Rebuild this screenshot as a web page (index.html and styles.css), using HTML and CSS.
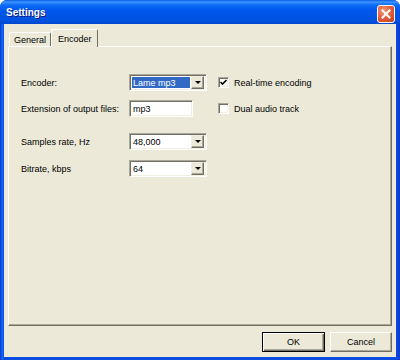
FILE: index.html
```html
<!DOCTYPE html>
<html lang="en">
<head>
    <meta charset="UTF-8">
    <title>Settings</title>
    <link rel="stylesheet" href="styles.css">
</head>
<body>

<div class="window">
    <div class="titlebar">
        <span class="title">Settings</span>
        <span class="close">
            <svg width="10" height="10" viewBox="0 0 10 10">
                <path d="M1.5 1.5 L8.5 8.5 M8.5 1.5 L1.5 8.5" stroke="#fff" stroke-width="2" stroke-linecap="square"/>
            </svg>
        </span>
    </div>

    <div class="client">
        <div class="tabs">
            <div class="tab">General</div>
            <div class="tab active">Encoder</div>
        </div>

        <div class="panel">
            <!-- Encoder -->
            <div class="row row-1">
                <span class="label">Encoder:</span>
                <div class="field">
                    <div class="combo">
                        <span class="value selected">Lame mp3</span>
                        <span class="drop"></span>
                    </div>
                </div>
                <label class="check">
                    <span class="box">
                        <svg width="9" height="9" viewBox="0 0 9 9">
                            <path d="M1.5 4 L3.5 6 L7.5 2" stroke="#000" stroke-width="1.6" fill="none"/>
                        </svg>
                    </span>
                    Real-time encoding
                </label>
            </div>

            <div class="row row-2">
                <span class="label">Extension of output files:</span>
                <div class="field">
                    <div class="textbox">mp3</div>
                </div>
                <label class="check">
                    <span class="box"></span>
                    Dual audio track
                </label>
            </div>

            <div class="row row-3">
                <span class="label">Samples rate, Hz</span>
                <div class="field">
                    <div class="combo">
                        <span class="value">48,000</span>
                        <span class="drop"></span>
                    </div>
                </div>
            </div>

            <div class="row row-4">
                <span class="label">Bitrate, kbps</span>
                <div class="field">
                    <div class="combo">
                        <span class="value">64</span>
                        <span class="drop"></span>
                    </div>
                </div>
            </div>
        </div>

        <div class="buttons">
            <button class="btn default">OK</button>
            <button class="btn">Cancel</button>
        </div>
    </div>
</div>

</body>
</html>
```

FILE: styles.css
```css
body {
    margin: 0;
    font-family: 'Liberation Sans', Arial, sans-serif;
    font-size: 9px;
    color: #000;
    background: #fff;
}

.window {
    width: 400px;
    height: 360px;
    display: flex;
    flex-direction: column;
    background: linear-gradient(to right, #0831d9 0, #166aee 2px, #0a4ce0 4px, #0a4ce0 396px, #0a3ad0 400px);
    border-radius: 7px 7px 0 0;
    overflow: hidden;
}

/* Title bar */
.titlebar {
    height: 24px;
    flex: none;
    display: flex;
    align-items: center;
    justify-content: space-between;
    padding: 0 5px 0 6px;
    background: linear-gradient(to bottom, #0a5ee8 0, #3d95ff 2px, #0d6cf5 5px, #0058ee 10px, #0054e3 17px, #0052de 21px, #0046d0 24px);
}

.title {
    color: #fff;
    font-weight: bold;
    font-size: 10px;
    text-shadow: 1px 1px #0a1883;
}

.close {
    width: 16px;
    height: 16px;
    display: flex;
    align-items: center;
    justify-content: center;
    border: 1px solid #fff;
    border-radius: 3px;
    background: radial-gradient(circle at 35% 30%, #f09a7c 0, #e2613f 45%, #c8391a 100%);
    margin-top: 3px;
}

/* Client area */
.client {
    flex: 1;
    margin: 0 4px 3px 4px;
    background: #ece9d8;
    display: flex;
    flex-direction: column;
}

.tabs {
    height: 22px;
    display: flex;
    align-items: flex-end;
    padding-left: 5px;
}

.tab {
    height: 13px;
    padding: 0 4px;
    display: flex;
    align-items: center;
    border: 1px solid;
    border-color: #fff #716f64 transparent #fff;
    border-bottom: none;
    border-radius: 2px 2px 0 0;
}

.tab.active {
    height: 17px;
    margin-bottom: -1px;
    padding: 0 5px 0 6px;
    background: #ece9d8;
    position: relative;
    z-index: 1;
}

.panel {
    height: 278px;
    margin: 0 4px;
    border: 1px solid;
    border-color: #fff #716f64 #716f64 #fff;
    box-shadow: inset -1px -1px #aca899;
    padding-left: 12px;
}

/* Form rows */
.row {
    height: 17px;
    display: flex;
    align-items: center;
}

.row-1 { margin-top: 27px; }
.row-2 { margin-top: 9px; }
.row-3 { margin-top: 16px; }
.row-4 { margin-top: 10px; }

.label {
    width: 108px;
}

.field {
    width: 78px;
    height: 17px;
}

.combo, .textbox {
    height: 17px;
    box-sizing: border-box;
    background: #fff;
    border: 1px solid;
    border-color: #aca899 #fff #fff #aca899;
    box-shadow: inset 1px 1px #716f64, inset -1px -1px #f1efe2;
    display: flex;
    align-items: center;
}

.combo {
    width: 78px;
    padding: 2px;
}

.textbox {
    width: 64px;
    padding-left: 3px;
}

.value {
    flex: 1;
    height: 100%;
    display: flex;
    align-items: center;
    padding-left: 1px;
}

.value.selected {
    background: #316ac5;
    color: #fff;
}

.drop {
    width: 13px;
    height: 13px;
    box-sizing: border-box;
    margin-left: 1px;
    background: #ece9d8;
    border: 1px solid;
    border-color: #f1efe2 #716f64 #716f64 #f1efe2;
    box-shadow: inset -1px -1px #aca899;
    display: flex;
    align-items: center;
    justify-content: center;
}

.drop::after {
    content: "";
    border-left: 3px solid transparent;
    border-right: 3px solid transparent;
    border-top: 3px solid #000;
}

.check {
    margin-left: 11px;
    display: flex;
    align-items: center;
    gap: 5px;
}

.box {
    width: 11px;
    height: 11px;
    box-sizing: border-box;
    background: #fff;
    border: 1px solid;
    border-color: #aca899 #fff #fff #aca899;
    box-shadow: inset 1px 1px #716f64, inset -1px -1px #f1efe2;
    display: flex;
    align-items: center;
    justify-content: center;
}

/* Buttons */
.buttons {
    display: flex;
    justify-content: flex-end;
    gap: 5px;
    margin: 6px 4px 0 0;
}

.btn {
    height: 20px;
    width: 62px;
    font-family: inherit;
    font-size: 9px;
    background: #ece9d8;
    border: 1px solid;
    border-color: #fff #716f64 #716f64 #fff;
    box-shadow: inset -1px -1px #aca899;
    padding: 0;
}

.btn.default {
    width: 63px;
    border-color: #000;
    box-shadow: inset 1px 1px #fff, inset -1px -1px #716f64, inset -2px -2px #aca899;
}
```
